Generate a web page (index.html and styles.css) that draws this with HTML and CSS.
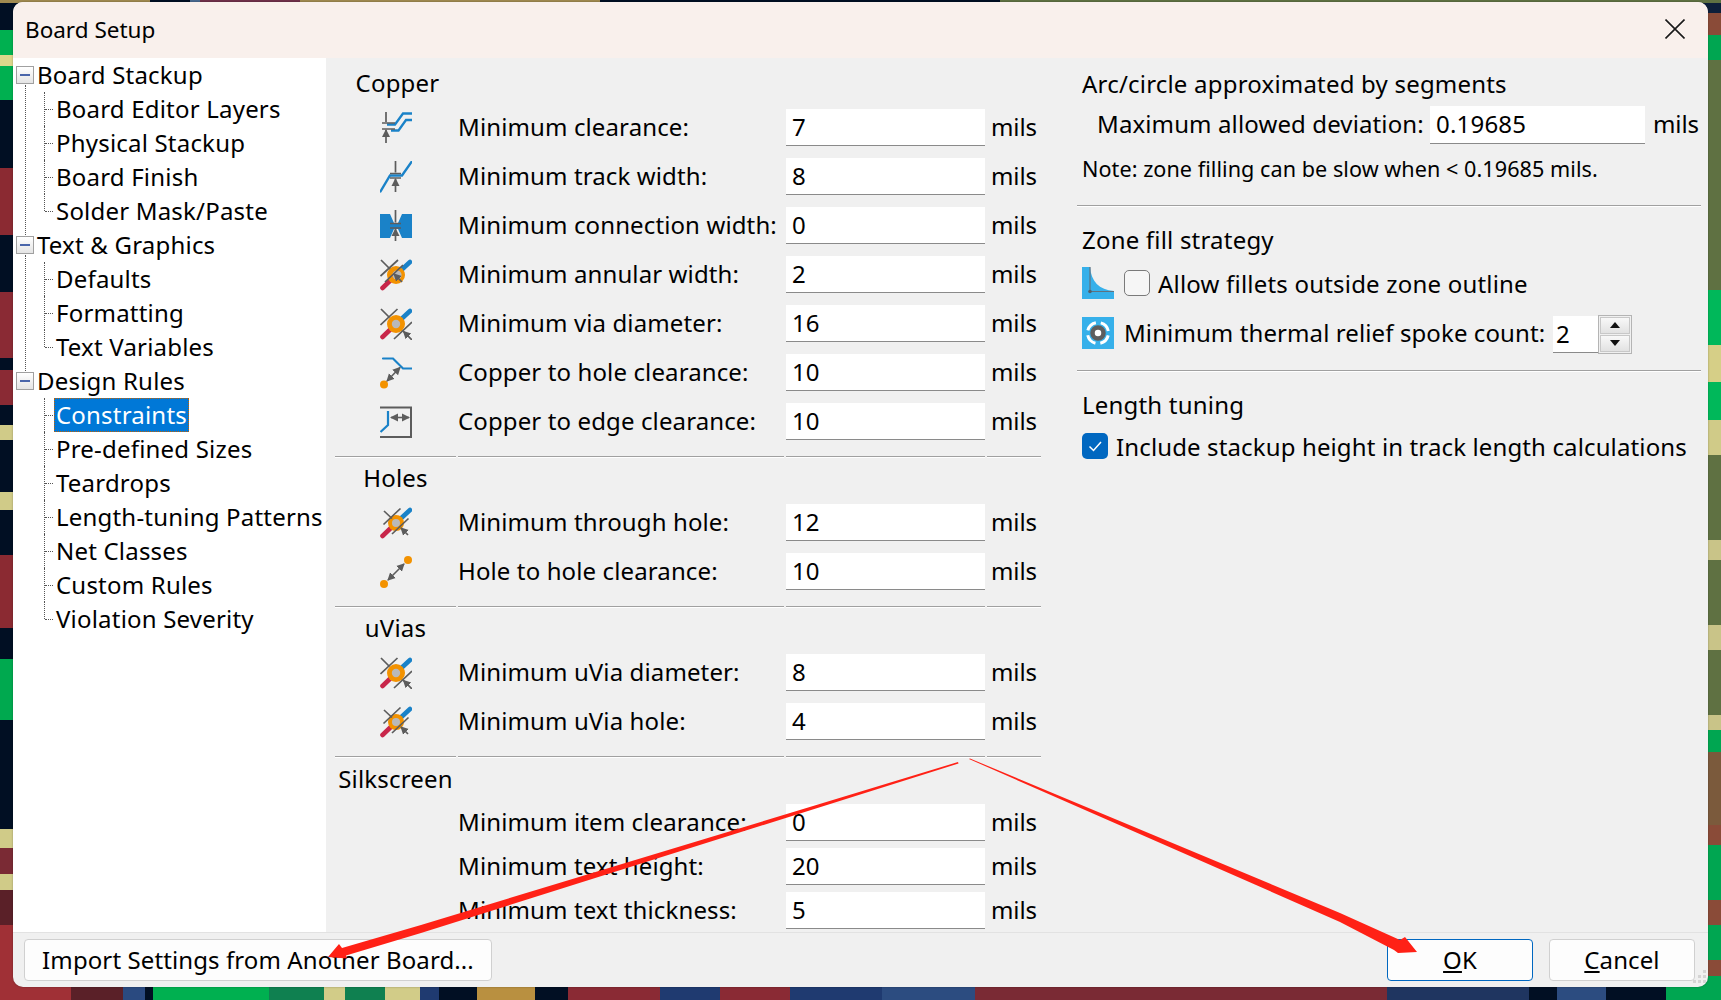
FILE: index.html
```html
<!DOCTYPE html>
<html lang="en">
<head>
<meta charset="utf-8">
<title>Board Setup</title>
<link rel="stylesheet" href="styles.css">
</head>
<body>
<svg class="sprite" aria-hidden="true">
  <defs>
    <marker id="tip" markerUnits="userSpaceOnUse" markerWidth="10" markerHeight="10" refX="7" refY="5" orient="auto-start-reverse"><path d="M0 1 L8 5 L0 9Z" fill="#5c5c5c"/></marker>
    <symbol id="i-clearance" viewBox="0 0 32 32">
      <path d="M7 12.5H15L23 1.5H32M11 18.5H18.5L26 8H32" fill="none" stroke="#1a82c8" stroke-width="2.3"/>
      <path d="M2 11H15M2 17H15" stroke="#5c5c5c" stroke-width="1.7"/>
      <path d="M6 0V10M6 31V18" stroke="#5c5c5c" stroke-width="1.7" marker-end="url(#tip)"/>
    </symbol>
    <symbol id="i-width" viewBox="0 0 32 32">
      <path d="M0.5 30.5L10 14.5H22L31.5 1" fill="none" stroke="#1a82c8" stroke-width="2.4" stroke-linecap="round"/>
      <path d="M10 12.5H21M10 17H21" stroke="#5c5c5c" stroke-width="1.7"/>
      <path d="M15.5 0V11.5M15.5 31V18" stroke="#5c5c5c" stroke-width="1.7" marker-end="url(#tip)"/>
    </symbol>
    <symbol id="i-conn" viewBox="0 0 32 32">
      <path d="M0 4H10L14 13H18L22 4H32V28H22L18 19H14L10 28H0Z" fill="#1a82c8"/>
      <path d="M10 13.5H21M10 18H21" stroke="#5c5c5c" stroke-width="1.7"/>
      <path d="M15.5 0V12.5M15.5 31V19" stroke="#5c5c5c" stroke-width="1.7" marker-end="url(#tip)"/>
    </symbol>
    <symbol id="i-annular" viewBox="0 0 32 32">
      <path d="M16 16L30 3" stroke="#1a82c8" stroke-width="4.6" stroke-linecap="round"/>
      <path d="M16 16L2.5 29" stroke="#c8264a" stroke-width="4.6" stroke-linecap="round"/>
      <circle cx="16" cy="16" r="9" fill="#f39200"/>
      <circle cx="17" cy="16" r="4.6" fill="#b9b9b9"/>
      <path d="M0.5 17L18 1M5 23L23 6" stroke="#5c5c5c" stroke-width="1.7"/>
      <path d="M1 1L10 10M22 23L14 15" stroke="#5c5c5c" stroke-width="1.7" marker-end="url(#tip)"/>
    </symbol>
    <symbol id="i-via" viewBox="0 0 32 32">
      <path d="M16 16L30 3" stroke="#1a82c8" stroke-width="4.6" stroke-linecap="round"/>
      <path d="M16 16L2.5 29" stroke="#c8264a" stroke-width="4.6" stroke-linecap="round"/>
      <circle cx="16" cy="16" r="9" fill="#f39200"/>
      <circle cx="16" cy="16" r="4.2" fill="#b9b9b9"/>
      <path d="M0.5 17L17.5 1M14 31L32 14" stroke="#5c5c5c" stroke-width="1.7"/>
      <path d="M1 1L9.5 9.5M32 32L23.5 23.5" stroke="#5c5c5c" stroke-width="1.7" marker-end="url(#tip)"/>
    </symbol>
    <symbol id="i-hole" viewBox="0 0 32 32">
      <path d="M16 16L30 3" stroke="#1a82c8" stroke-width="4.6" stroke-linecap="round"/>
      <path d="M16 16L2.5 29" stroke="#c8264a" stroke-width="4.6" stroke-linecap="round"/>
      <circle cx="16" cy="16" r="8" fill="#f39200"/>
      <circle cx="16" cy="16" r="4" fill="#b9b9b9"/>
      <path d="M3.5 17.5L20.5 1.5M12 27L28.5 11.5" stroke="#5c5c5c" stroke-width="1.7"/>
      <path d="M4 4L12 11.5M28 28L21 21" stroke="#5c5c5c" stroke-width="1.7" marker-end="url(#tip)"/>
    </symbol>
    <symbol id="i-cuhole" viewBox="0 0 32 32">
      <path d="M3 1.5H13L23 11.5H32" fill="none" stroke="#1a82c8" stroke-width="2.2" stroke-linecap="round"/>
      <circle cx="4" cy="27.5" r="4" fill="#f39200"/>
      <path d="M7 24L20 10.5" stroke="#5c5c5c" stroke-width="1.6" marker-start="url(#tip)" marker-end="url(#tip)"/>
    </symbol>
    <symbol id="i-edge" viewBox="0 0 32 32">
      <path d="M0 1.5H31V31H0" fill="none" stroke="#5c5c5c" stroke-width="2"/>
      <path d="M0.5 26L8 19V5" fill="none" stroke="#1a82c8" stroke-width="2.2"/>
      <path d="M11 11.5H29" stroke="#5c5c5c" stroke-width="1.6" marker-start="url(#tip)" marker-end="url(#tip)"/>
    </symbol>
    <symbol id="i-h2h" viewBox="0 0 32 32">
      <circle cx="4" cy="28" r="4" fill="#f39200"/>
      <circle cx="28" cy="4" r="4" fill="#f39200"/>
      <path d="M8 24L24 8" stroke="#5c5c5c" stroke-width="1.6" marker-start="url(#tip)" marker-end="url(#tip)"/>
    </symbol>
    <symbol id="i-fillet" viewBox="0 0 32 32">
      <path d="M0 0H8C9 14 17 23 32 24V32H0Z" fill="#36b0ea"/>
      <path d="M8 0V24.5H32" fill="none" stroke="#5f7280" stroke-width="1.2"/>
      <circle cx="8" cy="24.5" r="1.8" fill="#50606c"/>
    </symbol>
    <symbol id="i-thermal" viewBox="0 0 32 32">
      <rect width="32" height="32" fill="#36b0ea"/>
      <circle cx="16" cy="16" r="10.5" fill="none" stroke="#fff" stroke-width="3" stroke-dasharray="11.5 5" stroke-dashoffset="-2.5"/>
      <circle cx="16" cy="16" r="5.5" fill="#fff" stroke="#5e5e5e" stroke-width="4.5"/>
    </symbol>
  </defs>
</svg>

<main class="dialog">
  <header class="titlebar">
    <span class="title">Board Setup</span>
    <svg class="close" viewBox="0 0 20 20" aria-label="Close"><path d="M0.5 0.5L19.5 19.5M19.5 0.5L0.5 19.5" stroke="#1a1a1a" stroke-width="1.6" fill="none"/></svg>
  </header>

  <div class="content">
    <nav class="tree">
      <section class="group has-next">
        <div class="tree-top"><span class="box"></span><span>Board Stackup</span></div>
        <div class="tree-child"><span>Board Editor Layers</span></div>
        <div class="tree-child"><span>Physical Stackup</span></div>
        <div class="tree-child"><span>Board Finish</span></div>
        <div class="tree-child last"><span>Solder Mask/Paste</span></div>
      </section>
      <section class="group has-next">
        <div class="tree-top"><span class="box"></span><span>Text &amp; Graphics</span></div>
        <div class="tree-child"><span>Defaults</span></div>
        <div class="tree-child"><span>Formatting</span></div>
        <div class="tree-child last"><span>Text Variables</span></div>
      </section>
      <section class="group">
        <div class="tree-top"><span class="box"></span><span>Design Rules</span></div>
        <div class="tree-child"><span class="selected">Constraints</span></div>
        <div class="tree-child"><span>Pre-defined Sizes</span></div>
        <div class="tree-child"><span>Teardrops</span></div>
        <div class="tree-child"><span>Length-tuning Patterns</span></div>
        <div class="tree-child"><span>Net Classes</span></div>
        <div class="tree-child"><span>Custom Rules</span></div>
        <div class="tree-child last"><span>Violation Severity</span></div>
      </section>
    </nav>

    <div class="panel">
      <div class="rules">
        <div class="heading first">Copper</div>
        <div class="rule"><svg class="icon"><use href="#i-clearance"/></svg><span>Minimum clearance:</span><div class="field">7</div><span class="unit">mils</span></div>
        <div class="rule"><svg class="icon"><use href="#i-width"/></svg><span>Minimum track width:</span><div class="field">8</div><span class="unit">mils</span></div>
        <div class="rule"><svg class="icon"><use href="#i-conn"/></svg><span>Minimum connection width:</span><div class="field">0</div><span class="unit">mils</span></div>
        <div class="rule"><svg class="icon"><use href="#i-annular"/></svg><span>Minimum annular width:</span><div class="field">2</div><span class="unit">mils</span></div>
        <div class="rule"><svg class="icon"><use href="#i-via"/></svg><span>Minimum via diameter:</span><div class="field">16</div><span class="unit">mils</span></div>
        <div class="rule"><svg class="icon"><use href="#i-cuhole"/></svg><span>Copper to hole clearance:</span><div class="field">10</div><span class="unit">mils</span></div>
        <div class="rule"><svg class="icon"><use href="#i-edge"/></svg><span>Copper to edge clearance:</span><div class="field">10</div><span class="unit">mils</span></div>
        <div class="sep-row"><i></i><i></i><i></i><i></i></div>
        <div class="heading holes">Holes</div>
        <div class="rule"><svg class="icon"><use href="#i-hole"/></svg><span>Minimum through hole:</span><div class="field">12</div><span class="unit">mils</span></div>
        <div class="rule"><svg class="icon"><use href="#i-h2h"/></svg><span>Hole to hole clearance:</span><div class="field">10</div><span class="unit">mils</span></div>
        <div class="sep-row"><i></i><i></i><i></i><i></i></div>
        <div class="heading holes">uVias</div>
        <div class="rule"><svg class="icon"><use href="#i-via"/></svg><span>Minimum uVia diameter:</span><div class="field">8</div><span class="unit">mils</span></div>
        <div class="rule"><svg class="icon"><use href="#i-hole"/></svg><span>Minimum uVia hole:</span><div class="field">4</div><span class="unit">mils</span></div>
        <div class="sep-row"><i></i><i></i><i></i><i></i></div>
        <div class="heading silk">Silkscreen</div>
        <div class="rule tight"><span></span><span>Minimum item clearance:</span><div class="field">0</div><span class="unit">mils</span></div>
        <div class="rule tight"><span></span><span>Minimum text height:</span><div class="field">20</div><span class="unit">mils</span></div>
        <div class="rule tight"><span></span><span>Minimum text thickness:</span><div class="field">5</div><span class="unit">mils</span></div>
      </div>

      <div class="side">
        <div class="side-title top">Arc/circle approximated by segments</div>
        <div class="deviation"><span class="dev-label">Maximum allowed deviation:</span><div class="field dev-field">0.19685</div><span class="dev-unit">mils</span></div>
        <div class="note">Note: zone filling can be slow when &lt; 0.19685 mils.</div>
        <div class="side-sep"></div>
        <div class="side-title">Zone fill strategy</div>
        <div class="option fillet"><svg class="icon"><use href="#i-fillet"/></svg><span class="check"></span><span>Allow fillets outside zone outline</span></div>
        <div class="option spoke"><svg class="icon"><use href="#i-thermal"/></svg><span class="spoke-label">Minimum thermal relief spoke count:</span><div class="field spin-field">2</div>
          <div class="spinner"><span class="spin-up"></span><span class="spin-down"></span></div>
        </div>
        <div class="side-sep lower"></div>
        <div class="side-title">Length tuning</div>
        <div class="option stackup"><span class="check on"><svg viewBox="0 0 26 26"><path d="M7.5 13.5L11.5 17.5L19 9" fill="none" stroke="#fff" stroke-width="1.5"/></svg></span><span class="stackup-label">Include stackup height in track length calculations</span></div>
      </div>
    </div>
  </div>

  <footer class="footer">
    <div class="btn import">Import Settings from Another Board...</div>
    <div class="btn primary"><span><u>O</u>K</span></div>
    <div class="btn cancel"><span><u>C</u>ancel</span></div>
    <svg class="grip" viewBox="0 0 14 16"><path d="M10 1h3v3h-3zM10 6h3v3h-3zM10 11h3v3h-3zM5 6h3v3H5zM5 11h3v3H5zM0 11h3v3H0z" fill="#d4d4d4"/></svg>
  </footer>
</main>

<svg class="annotations" viewBox="0 0 1721 1000" aria-hidden="true">
  <polygon fill="#ff2116" points="958,762 958.5,763.5 421,933 346,955.5 347,958.5 328,957 339,944 342,948 421,925"/>
  <polygon fill="#ff2116" points="969,759 970,758.5 1340,913 1400,940 1405,937 1417,952 1398,953 1394,950 1340,922"/>
</svg>
</body>
</html>
```
FILE: styles.css
```css
* { box-sizing: border-box; }
html, body { margin: 0; }
body {
  width: 1721px;
  height: 1000px;
  overflow: hidden;
  padding: 2px 13px 13px 13px;
  display: flex;
  position: relative;
  font-family: "Noto Sans", "Open Sans", sans-serif;
  font-size: 24px;
  letter-spacing: .2px;
  color: #000;
  background-color: #010f23;
  background-repeat: no-repeat;
  background-image:
    linear-gradient(to right, #a08a50 0 150px, #010f23 150px 190px, #4a6a90 190px 200px, #70304a 200px 300px, #a08a50 300px 600px, #010f23 600px 1000px, #5f7142 1000px 1721px),
    linear-gradient(to right, #a03036 0 71px, #5a2028 71px 123px, #2a4a80 123px 145px, #010f23 145px 153px, #00b050 153px 269px, #0f8050 269px 324px, #d2cc88 324px 345px, #0f8050 345px 385px, #d2cc88 385px 420px, #1f3a70 420px 439px, #010f23 439px 477px, #b99040 477px 535px, #010f23 535px 568px, #8a2a34 568px 660px, #1f3a70 660px 720px, #8a2a34 720px 790px, #1f3a70 790px 882px, #2c4c80 882px 975px, #7a2a34 975px 1387px, #1f3560 1387px 1529px, #010f23 1529px 1557px, #2c4c80 1557px 1606px, #010f23 1606px 1666px, #00a651 1666px 1721px),
    linear-gradient(to bottom, #010f23 0 30px, #00b050 30px 55px, #dcd78c 55px 66px, #00b050 66px 100px, #010f23 100px 168px, #8b2a32 168px 235px, #010f23 235px 292px, #8a2a34 292px 358px, #010f23 358px 370px, #8a2a34 370px 405px, #010f23 405px 425px, #d0cb88 425px 440px, #010f23 440px 492px, #d0cb88 492px 510px, #010f23 510px 555px, #8b2a32 555px 628px, #010f23 628px 659px, #00a94f 659px 720px, #010f23 720px 829px, #d0cb88 829px 848px, #7a2a34 848px 874px, #d0cb88 874px 890px, #5a2028 890px 925px, #a03036 925px 1000px),
    linear-gradient(to bottom, #0d1f3a 0 13px, #8a4b38 13px 35px, #00a651 35px 60px, #5f7142 60px 290px, #00b85a 290px 345px, #d6cf87 345px 382px, #00b85a 382px 420px, #d0cb88 420px 455px, #5f7142 455px 540px, #c9c488 540px 560px, #5f7142 560px 625px, #c9c488 625px 650px, #5f7142 650px 715px, #c9c488 715px 730px, #00a651 730px 752px, #7b5a3c 752px 825px, #8a4b38 825px 845px, #00a651 845px 900px, #8a4b38 900px 925px, #00a651 925px 960px, #8a4b38 960px 1000px);
  background-size: 100% 3px, 100% 24px, 24px 100%, 28px 100%;
  background-position: 0 0, 0 100%, 0 0, 100% 0;
}
.sprite { position: absolute; width: 0; height: 0; }

.dialog {
  flex: 1;
  min-width: 0;
  display: flex;
  flex-direction: column;
  background: #f0f0f0;
  border-radius: 10px;
  overflow: hidden;
  box-shadow: 0 0 2px rgba(0, 0, 0, .35);
}
.titlebar {
  height: 56px;
  flex: none;
  display: flex;
  align-items: center;
  justify-content: space-between;
  padding: 0 23px 2px 12px;
  background: #f9f0ec;
}
.title { letter-spacing: 0; font-size: 22.5px; }
.close { width: 20px; height: 20px; }

.content { flex: 1; min-height: 0; display: flex; overflow: hidden; }

/* tree */
.tree { width: 313px; flex: none; background: #fff; overflow: hidden; white-space: nowrap; line-height: 34px; }
.group { position: relative; }
.group.has-next::before {
  content: "";
  position: absolute;
  left: 12px;
  top: 27px;
  bottom: -9px;
  border-left: 1px dotted #555;
}
.tree-top { height: 34px; display: flex; align-items: center; gap: 3px; padding-left: 3px; }
.box {
  width: 18px;
  height: 18px;
  border: 1px solid #a0a0a0;
  background: linear-gradient(#fff, #e4e4e4);
  display: flex;
  align-items: center;
  justify-content: center;
  flex: none;
}
.box::before { content: ""; width: 10px; height: 2px; background: #4a66aa; }
.tree-child { height: 34px; padding-left: 41px; position: relative; display: flex; align-items: center; }
.tree-child > span { padding: 0 2px; }
.tree-child::before {
  content: "";
  position: absolute;
  left: 31px;
  top: 0;
  bottom: 0;
  border-left: 1px dotted #555;
}
.tree-child.last::before { bottom: 50%; }
.tree-child::after {
  content: "";
  position: absolute;
  left: 32px;
  width: 8px;
  top: 50%;
  border-top: 1px dotted #555;
}
.selected { background: #0078d7; color: #fff; height: 34px; outline: 1px dotted #c06000; outline-offset: -1px; }

/* rule grid */
.panel { flex: 1; min-width: 0; display: flex; padding-left: 9px; }
.rules { width: 706px; flex: none; letter-spacing: .12px; --cols: 121px 326px 199px 54px; }
.heading { width: 121px; text-align: center; height: 36px; line-height: 34px; white-space: nowrap; letter-spacing: .2px; }
.heading.first { height: 45px; line-height: 50px; text-indent: 4px; }
.heading.holes { height: 37px; }
.heading.silk { height: 39px; line-height: 35px; }
.rule { display: grid; grid-template-columns: var(--cols); column-gap: 2px; align-items: center; height: 49px; white-space: nowrap; }
.rule.tight { height: 44px; }
.rule > span { padding-bottom: 2px; }
.rule .icon { justify-self: center; }
.icon { width: 32px; height: 32px; flex: none; display: block; }
.field { height: 37px; line-height: 36px; background: #fff; border-bottom: 1px solid #8a8a8a; padding-left: 6px; }
.rule .unit { padding-left: 4px; letter-spacing: -.1px; }
.sep-row { display: grid; grid-template-columns: var(--cols); column-gap: 2px; height: 15px; padding-top: 10px; }
.sep-row i { display: block; height: 2px; background: #a0a0a0; border-bottom: 1px solid #fff; }

/* right column */
.side { width: 624px; flex: none; margin-left: 36px; white-space: nowrap; }
.side-title { line-height: 33px; margin-top: 16px; padding-left: 5px; }
.side-title.top { margin-top: 9px; }
.deviation { display: flex; align-items: center; height: 38px; margin-top: 6px; padding-left: 20px; }
.dev-label, .dev-unit { padding-bottom: 4px; }
.dev-label { width: 333px; flex: none; letter-spacing: .12px; }
.dev-field { width: 215px; flex: none; height: 38px; }
.dev-unit { margin-left: 8px; letter-spacing: -.1px; }
.note { line-height: 33px; margin-top: 8px; padding-left: 5px; font-size: 21.6px; letter-spacing: .05px; }
.side-sep { height: 2px; margin-top: 20px; background: #a0a0a0; border-bottom: 1px solid #fff; }
.side-sep.lower { margin-top: 21px; }
.option { display: flex; align-items: center; padding-left: 5px; }
.fillet { height: 32px; margin-top: 11px; }
.fillet .check { margin: 0 8px 0 10px; }
.spoke { height: 32px; margin-top: 18px; }
.spoke-label { width: 429px; flex: none; margin-left: 10px; letter-spacing: .1px; padding-bottom: 2px; }
.spin-field { width: 45px; flex: none; height: 37px; padding-left: 3px; margin-top: 2px; }
.spinner { width: 34px; height: 39px; flex: none; border: 1px solid #b4b4b4; display: flex; flex-direction: column; gap: 1px; padding: 1px; background: #f0f0f0; margin-top: 2px; }
.spin-up, .spin-down { flex: 1; background: linear-gradient(#f8f8f8, #e2e2e2); border: 1px solid #c8c8c8; display: flex; align-items: center; justify-content: center; }
.spin-up::before { content: ""; border: 5px solid transparent; border-top: 0; border-bottom: 6px solid #111; }
.spin-down::before { content: ""; border: 5px solid transparent; border-bottom: 0; border-top: 6px solid #111; }
.stackup { height: 26px; margin-top: 12px; }
.stackup .check { margin-right: 8px; }
.stackup-label { letter-spacing: .13px; }
.check { width: 26px; height: 26px; flex: none; border: 1.5px solid #7a7a7a; border-radius: 5px; background: #f6f6f6; display: block; }
.check.on { background: #0067c0; border: 0; }
.check.on svg { display: block; width: 26px; height: 26px; }

/* footer */
.footer {
  height: 55px;
  flex: none;
  border-top: 1px solid #e2e2e2;
  padding: 6px 13px 5px 11px;
  display: flex;
  gap: 16px;
  position: relative;
}
.btn {
  height: 42px;
  width: 146px;
  flex: none;
  background: #fdfdfd;
  border: 1px solid #d0d0d0;
  border-radius: 4px;
  display: flex;
  align-items: center;
  justify-content: center;
  white-space: nowrap;
  padding-bottom: 2px;
  letter-spacing: .1px;
}
.btn.import { width: 468px; margin-right: auto; }
.btn.primary { border-color: #0067c0; }
.grip { position: absolute; right: 1px; bottom: 2px; width: 14px; height: 16px; }

.annotations { position: absolute; left: 0; top: 0; width: 1721px; height: 1000px; pointer-events: none; }
```
